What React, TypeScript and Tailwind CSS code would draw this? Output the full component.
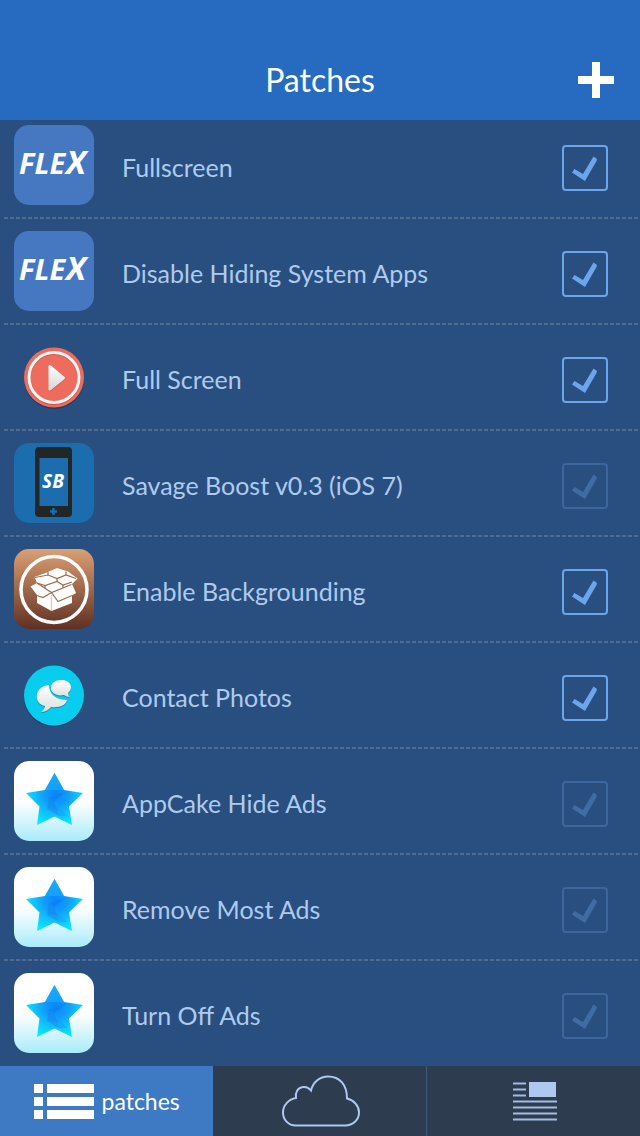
import { useState } from "react";
import type { ReactNode } from "react";

function FlexIcon() {
  return (
    <svg viewBox="0 0 80 80" className="size-20" aria-hidden="true">
      <rect width="80" height="80" rx="15" fill="#4678c1" />
      <g fill="#fff" fontFamily="'Open Sans', 'Noto Sans', sans-serif" fontStyle="italic" fontWeight="700">
        <text x="5" y="49" fontSize="29">FLE</text>
        <text x="52" y="49" fontSize="33">X</text>
      </g>
    </svg>
  );
}

function PlayIcon() {
  return (
    <svg viewBox="0 0 80 80" className="size-20" aria-hidden="true">
      <defs>
        <linearGradient id="play-arrow" x1="0" y1="0" x2="0" y2="1">
          <stop offset="0" stopColor="#ffffff" />
          <stop offset="1" stopColor="#d6d6d6" />
        </linearGradient>
      </defs>
      <circle cx="40" cy="42" r="30" fill="#1b3457" opacity="0.6" />
      <circle cx="40" cy="40.5" r="30" fill="#ee6c5e" />
      <circle cx="40" cy="41.5" r="25" fill="none" stroke="#b84a40" strokeWidth="3" opacity="0.6" />
      <circle cx="40" cy="40.5" r="25" fill="none" stroke="#f6f6f6" strokeWidth="3" />
      <path d="M35 30 Q35 28 37 29 L50.500 40 Q51.500 41.500 50.500 42.500 L37 54 Q35 55 35 53 Z" fill="#a8463c" opacity="0.6" />
      <path d="M34.500 29.500 Q34.500 27 37 28.500 L50 39.500 Q52 41 50 42.500 L37 53 Q34.500 54.500 34.500 52 Z" fill="url(#play-arrow)" />
    </svg>
  );
}

function SavageIcon() {
  return (
    <svg viewBox="0 0 80 80" className="size-20" aria-hidden="true">
      <rect width="80" height="80" rx="15" fill="#1b6dad" />
      <rect x="21" y="4" width="37" height="70" rx="4" fill="#222625" />
      <rect x="25.500" y="15" width="28.500" height="48" fill="#1b6dad" />
      <path d="M36 68.500h7M39.500 65v7" stroke="#1b6dad" strokeWidth="2.500" />
      <text
        x="39"
        y="45"
        fill="#fff"
        fontFamily="'Open Sans', 'Noto Sans', sans-serif"
        fontSize="19"
        fontStyle="italic"
        fontWeight="700"
        textAnchor="middle"
      >
        SB
      </text>
    </svg>
  );
}

function CydiaIcon() {
  return (
    <svg viewBox="0 0 80 80" className="size-20" aria-hidden="true">
      <defs>
        <linearGradient id="cydia-bg" x1="0" y1="0" x2="0" y2="1">
          <stop offset="0" stopColor="#dc9f74" />
          <stop offset="0.5" stopColor="#9f684b" />
          <stop offset="1" stopColor="#5f3022" />
        </linearGradient>
      </defs>
      <rect width="80" height="80" rx="15" fill="url(#cydia-bg)" />
      <circle cx="40" cy="40.500" r="33" fill="none" stroke="#fff" strokeWidth="3.500" />
      <path d="M16.500 37.500 L23 34 L20.500 28 L34 23 L43 19 L54 22.500 L63.500 29.500 L58 35 L62 44 L58 46.500 V54 L37.500 62 L23 54 V46 Z" fill="#fff" />
      <path d="M37.500 46 V62" stroke="#dccdc6" strokeWidth="1.500" />
      <g fill="none" stroke="#a06b50" strokeWidth="1.200">
        <path d="M21 28.500 L34 26 L43 29.500 L52 26 L62 29.500" />
        <path d="M34 26 V23 M52 26 V22.500" />
        <path d="M23 34 L31 36.500 L43 32.500 L49 36 L58 33" />
        <path d="M43 29.500 V32.500 M31 36.500 V39 M49 36 V39" />
        <path d="M23 34 L37.500 43.500 L57.500 35.500" />
        <path d="M23 46.500 L29 48.500 L37.500 43.500 L44 52.500 L58 46.500" />
      </g>
    </svg>
  );
}

function ChatIcon() {
  return (
    <svg viewBox="0 0 80 80" className="size-20" aria-hidden="true">
      <defs>
        <linearGradient id="chat-bubble" x1="0" y1="0" x2="0" y2="1">
          <stop offset="0" stopColor="#ffffff" />
          <stop offset="1" stopColor="#dedede" />
        </linearGradient>
      </defs>
      <circle cx="40" cy="42" r="30" fill="#1b3457" opacity="0.6" />
      <circle cx="40" cy="40.500" r="30" fill="#08cdee" />
      <path d="M35 31 C20 32 19 50 31 52 Q31 55 27 58 Q33 58 37 53 C46 54 52 51 53 46 C43 46 35 41 35 31 Z" fill="#0793ae" />
      <path d="M35 30 C20 31 19 49 31 51 Q31 54 27 57 Q33 57 37 52 C46 53 52 50 53 45 C43 45 35 40 35 30 Z" fill="url(#chat-bubble)" />
      <path d="M47 26 C57 26 60 34 54 39 Q54 42 56 43 Q52 43 50 41 C41 43 36 37 37 33 C38 28 42 26 47 26 Z" fill="#0793ae" />
      <path d="M47 25 C57 25 60 33 54 38 Q54 41 56 42 Q52 42 50 40 C41 42 36 36 37 32 C38 27 42 25 47 25 Z" fill="url(#chat-bubble)" />
    </svg>
  );
}

function StarIcon() {
  return (
    <svg viewBox="0 0 80 80" className="size-20" aria-hidden="true">
      <defs>
        <linearGradient id="star-bg" x1="0" y1="0" x2="0" y2="1">
          <stop offset="0.5" stopColor="#ffffff" />
          <stop offset="1" stopColor="#a9ebfb" />
        </linearGradient>
        <radialGradient id="star-fill" gradientUnits="userSpaceOnUse" cx="42" cy="33" r="34">
          <stop offset="0" stopColor="#0b84fc" />
          <stop offset="0.35" stopColor="#119cfb" />
          <stop offset="0.65" stopColor="#0fc4fc" />
          <stop offset="1" stopColor="#05effd" />
        </radialGradient>
      </defs>
      <rect width="80" height="80" rx="15" fill="url(#star-bg)" />
      <path d="M40.500 12 L50 29 L69 32 L55 45.500 L58 64 L40.500 55.500 L23 64 L25.500 45.500 L12 32 L31 29 Z" fill="url(#star-fill)" />
      <path d="M40.500 12 L50 29 L31 29 Z" fill="#1aa6fb" opacity="0.7" />
      <path d="M34 37 L53 30 L40 40 L46 50 L34 47 Z" fill="#0877ee" opacity="0.4" />
      <path d="M34 37 L40 40 L45 55 L33 48 Z" fill="#1a8ff0" opacity="0.6" />
      <path d="M40 40 L53 55 L45 55 Z" fill="#14a4f8" opacity="0.6" />
    </svg>
  );
}

interface Patch {
  id: string;
  name: string;
  icon: ReactNode;
  enabled: boolean;
}

const initialPatches: Patch[] = [
  { id: "fullscreen", name: "Fullscreen", icon: <FlexIcon />, enabled: true },
  { id: "hiding", name: "Disable Hiding System Apps", icon: <FlexIcon />, enabled: true },
  { id: "full-screen", name: "Full Screen", icon: <PlayIcon />, enabled: true },
  { id: "savage", name: "Savage Boost v0.3 (iOS 7)", icon: <SavageIcon />, enabled: false },
  { id: "background", name: "Enable Backgrounding", icon: <CydiaIcon />, enabled: true },
  { id: "contact", name: "Contact Photos", icon: <ChatIcon />, enabled: true },
  { id: "appcake", name: "AppCake Hide Ads", icon: <StarIcon />, enabled: false },
  { id: "most-ads", name: "Remove Most Ads", icon: <StarIcon />, enabled: false },
  { id: "turn-off", name: "Turn Off Ads", icon: <StarIcon />, enabled: false },
];

interface PatchRowProps {
  patch: Patch;
  onToggle: () => void;
}

function PatchRow({ patch, onToggle }: PatchRowProps) {
  return (
    <li className="group">
      <div className="flex items-center py-3 pl-3.5 pr-8">
        {patch.icon}
        <label htmlFor={patch.id} className="ml-7 flex-1 pt-1 text-[25px] leading-8 text-[#aecbef]">
          {patch.name}
        </label>
        <span className="mt-1.5 grid size-[46px]">
          <input
            id={patch.id}
            type="checkbox"
            checked={patch.enabled}
            onChange={onToggle}
            className="peer col-start-1 row-start-1 size-full appearance-none rounded-sm border-2 border-[#3d669d] checked:border-[#6ca5ec]"
          />
          <svg
            viewBox="0 0 46 46"
            className="pointer-events-none col-start-1 row-start-1 size-full fill-[#416ba3] peer-checked:fill-[#6ca5ec]"
            aria-hidden="true"
          >
            <path d="M10 27.500 L12.500 24 L21 29 L31.500 11.500 L35 14 L34.500 16 L23 36 Z" />
          </svg>
        </span>
      </div>
      <div className="ml-1 h-0.5 bg-[repeating-linear-gradient(90deg,#506c92_0_4px,transparent_4px_6px)] group-last:hidden" />
    </li>
  );
}

export default function App() {
  const [patches, setPatches] = useState(initialPatches);

  const toggle = (id: string) => {
    setPatches(patches.map((p) => (p.id === id ? { ...p, enabled: !p.enabled } : p)));
  };

  return (
    <div className="flex min-h-screen flex-col bg-[#294f80] font-['Lato',sans-serif]">
      {/* Header */}
      <header className="z-10 grid h-[120px] grid-cols-[1fr_auto_1fr] items-center bg-[#276bc0] px-[26px] pt-10">
        <h1 className="col-start-2 text-[32px] leading-10 text-white">Patches</h1>
        <button type="button" aria-label="Add patch" className="justify-self-end">
          <svg viewBox="0 0 36 36" className="size-9" aria-hidden="true">
            <path d="M14 0h8v14h14v8H22v14h-8V22H0v-8h14z" fill="#fff" />
          </svg>
        </button>
      </header>

      {/* The list is scrolled slightly under the header */}
      <main className="-mt-[7px] flex-1">
        <ul>
          {patches.map((patch) => (
            <PatchRow key={patch.id} patch={patch} onToggle={() => toggle(patch.id)} />
          ))}
        </ul>
      </main>

      {/* Tab bar */}
      <nav className="grid h-[70px] grid-cols-3 bg-[#2d3d4f]">
        <button type="button" className="flex items-center justify-center gap-2 bg-[#3e79c3] text-white">
          <svg viewBox="0 0 60 35" className="h-[35px] w-[60px]" fill="currentColor" aria-hidden="true">
            <path d="M0 0h9v9H0zM13 0h47v9H13zM0 13h9v9H0zM13 13h47v9H13zM0 26h9v9H0zM13 26h47v9H13z" />
          </svg>
          <span className="text-[23px] leading-8">patches</span>
        </button>
        <button type="button" aria-label="Cloud" className="flex items-center justify-center border-r border-[#425a78] pl-1">
          <svg viewBox="0 0 78 52" className="h-[52px] w-[78px]" fill="none" stroke="#b0c8ef" strokeWidth="2" aria-hidden="true">
            <path d="M14 50.500 C6 50.500 1 44.500 1 37.500 C1 30 7 24 14 23 C13 17 16 12.500 21 12 C24 11.500 27 13 29 15.500 C31 7 38 1.500 46 1.500 C58 1.500 65 10 65 23.500 C72 25 77 31 77 37.500 C77 45 71 50.500 63 50.500 Z" />
          </svg>
        </button>
        <button type="button" aria-label="News" className="flex items-center justify-center pl-1">
          <svg viewBox="0 0 44 39" className="h-[39px] w-11" aria-hidden="true">
            <path d="M16 0h27v15H16z" fill="#b0c8ef" />
            <path d="M0 1.500h13M0 7.500h13M0 13.500h13M0 19.500h44M0 25.500h44M0 31.500h44M0 37.500h44" stroke="#a3bce3" strokeWidth="2" />
          </svg>
        </button>
      </nav>
    </div>
  );
}
